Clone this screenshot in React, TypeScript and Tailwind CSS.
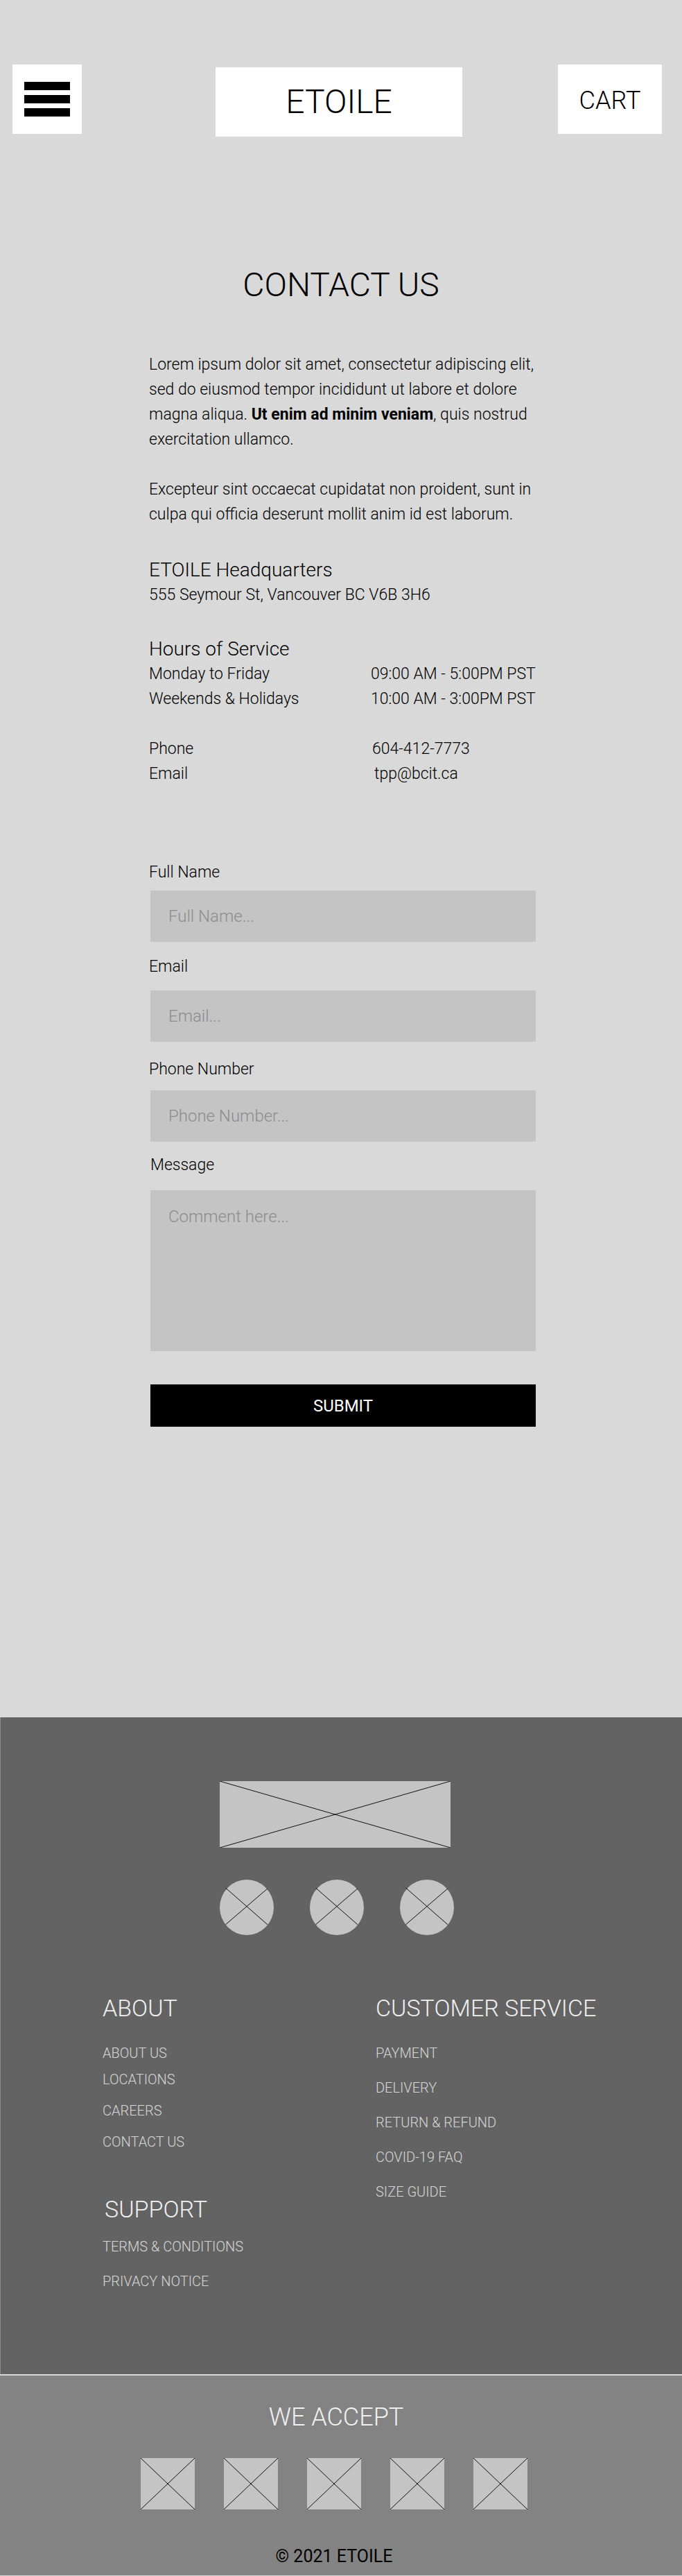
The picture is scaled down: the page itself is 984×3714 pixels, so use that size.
const hours = [
  { day: 'Monday to Friday', time: '09:00 AM - 5:00PM PST' },
  { day: 'Weekends & Holidays', time: '10:00 AM - 3:00PM PST' },
]

const aboutLinks = [
  { label: 'ABOUT US', mt: 'mt-[38px]' },
  { label: 'LOCATIONS', mt: 'mt-[18px]' },
  { label: 'CAREERS', mt: 'mt-[25px]' },
  { label: 'CONTACT US', mt: 'mt-[25px]' },
]

const serviceLinks = ['PAYMENT', 'DELIVERY', 'RETURN & REFUND', 'COVID-19 FAQ', 'SIZE GUIDE']

function CrossCircle() {
  return (
    <svg width="78" height="80" viewBox="0 0 78 80">
      <ellipse cx="39" cy="40" rx="39" ry="40" fill="#c4c4c4" />
      <line x1="8.6" y1="12" x2="68.8" y2="64.7" stroke="#111" strokeWidth="1" />
      <line x1="68.8" y1="13" x2="8.6" y2="64.7" stroke="#111" strokeWidth="1" />
    </svg>
  )
}

function CrossBox({ w, h }: { w: number; h: number }) {
  return (
    <svg width={w} height={h} viewBox={`0 0 ${w} ${h}`}>
      <rect x="0" y="0" width={w} height={h} fill="#c4c4c4" />
      <line x1="0" y1="0" x2={w} y2={h} stroke="#111" strokeWidth="1" />
      <line x1={w} y1="0" x2="0" y2={h} stroke="#111" strokeWidth="1" />
    </svg>
  )
}

export default function App() {
  return (
    <div className="w-[984px] font-['Roboto','Noto_Sans',sans-serif] font-light text-black">
      {/* main area */}
      <div className="bg-[#d9d9d9] pt-[93px] pb-[419px]">
        <header className="flex items-start">
          <div className="ml-[18px] flex h-[100px] w-[100px] flex-col gap-[7px] bg-white pl-[17px] pt-[25px]">
            <span className="block h-[12px] w-[66px] bg-black" />
            <span className="block h-[12px] w-[66px] bg-black" />
            <span className="block h-[12px] w-[66px] bg-black" />
          </div>
          <div className="ml-[193px] mt-1 flex h-[100px] w-[356px] items-center justify-center bg-white text-[48px] leading-none">
            ETOILE
          </div>
          <div className="ml-[138px] flex h-[100px] w-[150px] items-center justify-center bg-white pt-1 text-[36px] leading-none">
            CART
          </div>
        </header>

        <h1 className="mt-[190px] text-center text-[48px] leading-none">CONTACT US</h1>

        <div className="ml-[215px] w-[560px]">
          <div className="mt-[73px] text-[23px] leading-[36px]">
            <p>
              Lorem ipsum dolor sit amet, consectetur adipiscing elit, sed do eiusmod tempor incididunt ut labore et
              dolore magna aliqua. <b className="font-bold">Ut enim ad minim veniam</b>, quis nostrud exercitation
              ullamco.
            </p>
            <p className="mt-9">
              Excepteur sint occaecat cupidatat non proident, sunt in culpa qui officia deserunt mollit anim id est
              laborum.
            </p>
          </div>

          <h2 className="mt-[44px] text-[28px] leading-[36px]">ETOILE Headquarters</h2>
          <p className="text-[23px] leading-[36px]">555 Seymour St, Vancouver BC V6B 3H6</p>

          <h2 className="mt-[42px] text-[28px] leading-[36px]">Hours of Service</h2>
          <div className="grid grid-cols-[320px_1fr] text-[23px] leading-[36px]">
            {hours.map((h) => (
              <div key={h.day} className="contents">
                <span>{h.day}</span>
                <span>{h.time}</span>
              </div>
            ))}
          </div>

          <div className="mt-9 grid grid-cols-[320px_1fr] text-[23px] leading-[36px]">
            <span>Phone</span>
            <span className="pl-[2px]">604-412-7773</span>
            <span>Email</span>
            <span className="pl-[5px]">tpp@bcit.ca</span>
          </div>

          <form className="mt-[106px] text-[23px] leading-[36px]" onSubmit={(e) => e.preventDefault()}>
            <label className="block">Full Name</label>
            <input
              placeholder="Full Name..."
              className="ml-[2px] mt-2 block h-[74px] w-[556px] bg-[#c4c4c4] pl-[26px] text-[24px] outline-none placeholder:text-[#8c8c8c]"
            />
            <label className="mt-[18px] block">Email</label>
            <input
              placeholder="Email..."
              className="ml-[2px] mt-4 block h-[74px] w-[556px] bg-[#c4c4c4] pl-[26px] text-[24px] outline-none placeholder:text-[#8c8c8c]"
            />
            <label className="mt-[22px] block">Phone Number</label>
            <input
              placeholder="Phone Number..."
              className="ml-[2px] mt-3 block h-[74px] w-[556px] bg-[#c4c4c4] pl-[26px] text-[24px] outline-none placeholder:text-[#8c8c8c]"
            />
            <label className="mt-4 block pl-[2px]">Message</label>
            <textarea
              placeholder="Comment here..."
              className="ml-[2px] mt-[18px] block h-[232px] w-[556px] resize-none bg-[#c4c4c4] pl-[26px] pt-5 text-[24px] leading-9 outline-none placeholder:text-[#8c8c8c]"
            />
            <button
              type="submit"
              className="ml-[2px] mt-12 flex h-[61px] w-[556px] items-center justify-center bg-black text-[24px] font-normal text-white"
            >
              SUBMIT
            </button>
          </form>
        </div>
      </div>

      {/* footer */}
      <footer className="border-l border-[#8a8a8a] bg-[#636363] pb-[124px] pt-[92px]">
        <div className="ml-[316px]">
          <CrossBox w={333} h={96} />
        </div>
        <div className="ml-[316px] mt-[46px] flex gap-[52px]">
          <CrossCircle />
          <CrossCircle />
          <CrossCircle />
        </div>

        <div className="mt-[88px] grid grid-cols-[394px_1fr] pl-[147px]">
          <div>
            <h3 className="text-[34px] leading-none text-[#f0f0f0]">ABOUT</h3>
            {aboutLinks.map((l) => (
              <a key={l.label} className={`block text-[20px] leading-[20px] text-[#d6d6d6] ${l.mt}`}>
                {l.label}
              </a>
            ))}
            <h3 className="mt-[70px] pl-[3px] text-[34px] leading-none text-[#f0f0f0]">SUPPORT</h3>
            <a className="mt-[27px] block text-[20px] leading-[20px] text-[#d6d6d6]">TERMS &amp; CONDITIONS</a>
            <a className="mt-[30px] block text-[20px] leading-[20px] text-[#d6d6d6]">PRIVACY NOTICE</a>
          </div>
          <div>
            <h3 className="text-[34px] leading-none text-[#f0f0f0]">CUSTOMER SERVICE</h3>
            <div className="mt-[38px] flex flex-col gap-[30px]">
              {serviceLinks.map((l) => (
                <a key={l} className="block text-[20px] leading-[20px] text-[#d6d6d6]">
                  {l}
                </a>
              ))}
            </div>
          </div>
        </div>
      </footer>

      <section className="border-y-2 border-[#d9d9d9] bg-[#838383] pb-[15px] pt-[42px]">
        <h3 className="pr-[14px] text-center text-[36px] leading-none text-[#f0f0f0]">WE ACCEPT</h3>
        <div className="ml-[203px] mt-[41px] flex gap-[42px]">
          {[1, 2, 3, 4, 5].map((i) => (
            <CrossBox key={i} w={78} h={74} />
          ))}
        </div>
        <p className="mt-[55px] pr-[20px] text-center text-[25px] font-normal leading-none">© 2021 ETOILE</p>
      </section>
    </div>
  )
}
